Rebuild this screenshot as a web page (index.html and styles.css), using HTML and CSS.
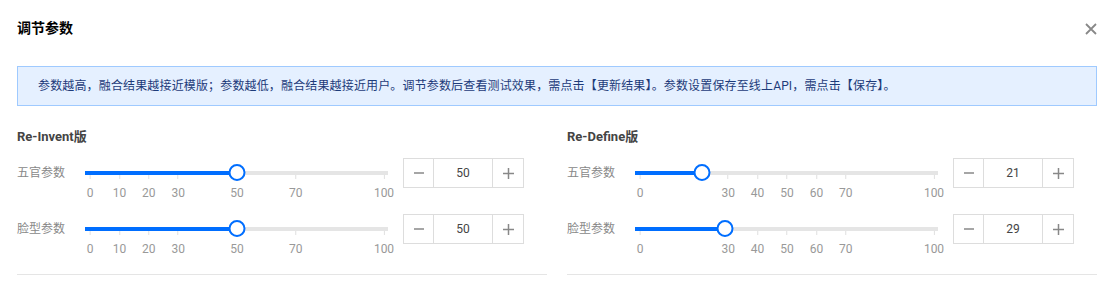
FILE: index.html
```html
<!DOCTYPE html>
<html lang="zh-CN">
<head>
  <meta charset="UTF-8" />
  <meta name="viewport" content="width=device-width, initial-scale=1.0" />
  <title>调节参数</title>
  <link rel="stylesheet" href="styles.css">
</head>
<body>
  <div class="dialog">
    <div class="header">
      <h3>调节参数</h3>
      <button class="close" title="关闭">
        <svg width="12" height="12" viewBox="0 0 12 12"><path d="M1 1L11 11M11 1L1 11" stroke="#888" stroke-width="1.8" fill="none"/></svg>
      </button>
    </div>

    <div class="alert">参数越高，融合结果越接近模版；参数越低，融合结果越接近用户。调节参数后查看测试效果，需点击【更新结果】。参数设置保存至线上API，需点击【保存】。</div>

    <div class="panels">
      <div class="panel">
        <h4>Re-Invent版</h4>
        <div class="row">
          <span class="label">五官参数</span>
          <div class="slider">
            <div class="track">
              <div class="rail"></div>
              <div class="fill" style="width: calc(50% + 5px)"></div>
              <span class="mark" style="left: 0%">0</span>
              <span class="mark" style="left: 10%">10</span>
              <span class="mark" style="left: 20%">20</span>
              <span class="mark" style="left: 30%">30</span>
              <span class="mark" style="left: 50%">50</span>
              <span class="mark" style="left: 70%">70</span>
              <span class="mark" style="left: 100%">100</span>
              <span class="thumb" style="left: 50%"></span>
            </div>
          </div>
          <div class="stepper">
            <button class="minus"><svg width="10" height="10" viewBox="0 0 10 10"><path d="M0 5H10" stroke="#888" stroke-width="1.5"/></svg></button>
            <input type="text" value="50" />
            <button class="plus"><svg width="11" height="11" viewBox="0 0 11 11"><path d="M0 5.5H11M5.5 0V11" stroke="#888" stroke-width="1.5"/></svg></button>
          </div>
        </div>
        <div class="row">
          <span class="label">脸型参数</span>
          <div class="slider">
            <div class="track">
              <div class="rail"></div>
              <div class="fill" style="width: calc(50% + 5px)"></div>
              <span class="mark" style="left: 0%">0</span>
              <span class="mark" style="left: 10%">10</span>
              <span class="mark" style="left: 20%">20</span>
              <span class="mark" style="left: 30%">30</span>
              <span class="mark" style="left: 50%">50</span>
              <span class="mark" style="left: 70%">70</span>
              <span class="mark" style="left: 100%">100</span>
              <span class="thumb" style="left: 50%"></span>
            </div>
          </div>
          <div class="stepper">
            <button class="minus"><svg width="10" height="10" viewBox="0 0 10 10"><path d="M0 5H10" stroke="#888" stroke-width="1.5"/></svg></button>
            <input type="text" value="50" />
            <button class="plus"><svg width="11" height="11" viewBox="0 0 11 11"><path d="M0 5.5H11M5.5 0V11" stroke="#888" stroke-width="1.5"/></svg></button>
          </div>
        </div>
      </div>

      <div class="panel">
        <h4>Re-Define版</h4>
        <div class="row">
          <span class="label">五官参数</span>
          <div class="slider">
            <div class="track">
              <div class="rail"></div>
              <div class="fill" style="width: calc(21% + 5px)"></div>
              <span class="mark" style="left: 0%">0</span>
              <span class="mark" style="left: 30%">30</span>
              <span class="mark" style="left: 40%">40</span>
              <span class="mark" style="left: 50%">50</span>
              <span class="mark" style="left: 60%">60</span>
              <span class="mark" style="left: 70%">70</span>
              <span class="mark" style="left: 100%">100</span>
              <span class="thumb" style="left: 21%"></span>
            </div>
          </div>
          <div class="stepper">
            <button class="minus"><svg width="10" height="10" viewBox="0 0 10 10"><path d="M0 5H10" stroke="#888" stroke-width="1.5"/></svg></button>
            <input type="text" value="21" />
            <button class="plus"><svg width="11" height="11" viewBox="0 0 11 11"><path d="M0 5.5H11M5.5 0V11" stroke="#888" stroke-width="1.5"/></svg></button>
          </div>
        </div>
        <div class="row">
          <span class="label">脸型参数</span>
          <div class="slider">
            <div class="track">
              <div class="rail"></div>
              <div class="fill" style="width: calc(29% + 5px)"></div>
              <span class="mark" style="left: 0%">0</span>
              <span class="mark" style="left: 30%">30</span>
              <span class="mark" style="left: 40%">40</span>
              <span class="mark" style="left: 50%">50</span>
              <span class="mark" style="left: 60%">60</span>
              <span class="mark" style="left: 70%">70</span>
              <span class="mark" style="left: 100%">100</span>
              <span class="thumb" style="left: 29%"></span>
            </div>
          </div>
          <div class="stepper">
            <button class="minus"><svg width="10" height="10" viewBox="0 0 10 10"><path d="M0 5H10" stroke="#888" stroke-width="1.5"/></svg></button>
            <input type="text" value="29" />
            <button class="plus"><svg width="11" height="11" viewBox="0 0 11 11"><path d="M0 5.5H11M5.5 0V11" stroke="#888" stroke-width="1.5"/></svg></button>
          </div>
        </div>
      </div>
    </div>
  </div>
</body>
</html>
```

FILE: styles.css
```css
body {
  margin: 0;
  font-family: Roboto, "Noto Sans CJK SC", sans-serif;
  font-size: 12px;
  color: #444;
  background-color: white;
  overflow: hidden;
}
.dialog {
  padding: 0 10px 0 17px;
}
.header {
  display: flex;
  justify-content: space-between;
  align-items: center;
  padding-top: 18px;
  height: 20px;
  margin-bottom: 28px;
}
.header h3 {
  margin: 0;
  font-size: 14px;
  line-height: 20px;
  font-weight: bold;
  color: #000;
}
.close {
  border: none;
  background: none;
  padding: 0;
  width: 12px;
  height: 12px;
  margin-top: 1px;
  cursor: pointer;
  display: flex;
}
.alert {
  background-color: #e5f0ff;
  border: 1px solid #9fcaff;
  padding: 10px 20px;
  line-height: 18px;
  letter-spacing: 0.15px;
  color: #1d3b7a;
}
.panels {
  display: grid;
  grid-template-columns: 1fr 1fr;
  column-gap: 20px;
}
.panel {
  padding-bottom: 4px;
  border-bottom: 1px solid #e5e5e5;
}
.panel h4 {
  margin: 21px 0 11px;
  font-size: 13px;
  line-height: 20px;
  font-weight: bold;
  color: #444;
}
.row {
  display: flex;
  align-items: flex-start;
  height: 56px;
}
.label {
  width: 68px;
  line-height: 30px;
  color: #888;
}
.slider {
  width: 303px;
  padding: 0 4px 0 5px;
  box-sizing: border-box;
}
.track {
  position: relative;
  height: 30px;
}
.rail {
  position: absolute;
  left: -5px;
  right: -4px;
  top: 13px;
  height: 4px;
  background-color: #e5e5e5;
}
.fill {
  position: absolute;
  left: -5px;
  top: 13px;
  height: 4px;
  background-color: #006eff;
}
.mark {
  position: absolute;
  top: 17px;
  transform: translateX(-50%);
  display: flex;
  flex-direction: column;
  align-items: center;
  font-size: 12px;
  line-height: 14px;
  color: #999;
}
.mark::before {
  content: "";
  width: 1px;
  height: 4px;
  margin-bottom: 7px;
  background-color: #e0e0e0;
}
.thumb {
  position: absolute;
  top: 6px;
  width: 17px;
  height: 17px;
  box-sizing: border-box;
  border: 2px solid #006eff;
  border-radius: 50%;
  background-color: white;
  transform: translateX(-50%);
}
.stepper {
  display: flex;
  width: 121px;
  height: 30px;
  margin-left: 15px;
  box-sizing: border-box;
  border: 1px solid #ddd;
}
.stepper button {
  border: none;
  background: white;
  padding: 0;
  display: flex;
  align-items: center;
  justify-content: center;
  cursor: pointer;
}
.stepper .minus {
  width: 30px;
  border-right: 1px solid #ddd;
}
.stepper .plus {
  width: 31px;
  border-left: 1px solid #ddd;
}
.stepper input {
  flex: 1;
  min-width: 0;
  border: none;
  padding: 0;
  text-align: center;
  font-family: Roboto, "Noto Sans CJK SC", sans-serif;
  font-size: 12px;
  color: #444;
  outline: none;
}
```
